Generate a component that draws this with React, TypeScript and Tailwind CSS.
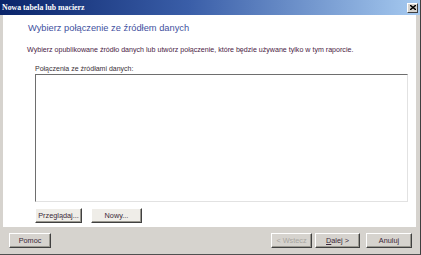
import React from "react";

function Btn({ children, w, disabled, light }: { children: React.ReactNode; w: string; disabled?: boolean; light?: boolean }) {
  return (
    <div
      className={`${w} h-[15px] flex items-center justify-center ${light ? "bg-[#efede8]" : "bg-[#d6d3ce]"} border border-t-white border-l-white border-r-[#404040] border-b-[#404040] shadow-[inset_-1px_-1px_0_#9a9890] text-[7.3px] leading-none ${disabled ? "text-[#a8a5a0]" : "text-[#3a2838]"}`}
    >
      {children}
    </div>
  );
}

export default function App() {
  return (
    <div
      className="w-[421px] h-[255px] bg-[#d6d3ce] flex flex-col overflow-hidden border-r border-b border-r-[#404040] border-b-[#505050]"
      style={{ fontFamily: "'Liberation Sans', Arial, sans-serif" }}
    >
      <div className="h-[15px] shrink-0 flex items-center justify-between pl-[2px] pr-[2px] bg-[linear-gradient(90deg,#0a246a_0%,#3a5ea8_45%,#a6caf0_100%)]">
        <span className="text-white font-bold text-[7.8px] leading-none" style={{ fontFamily: "'Liberation Serif', 'DejaVu Serif', serif" }}>
          Nowa tabela lub macierz
        </span>
        <div className="w-[11px] h-[10px] bg-[#d6d3ce] border border-t-white border-l-white border-r-[#404040] border-b-[#404040] flex items-center justify-center">
          <svg width="6" height="5" viewBox="0 0 6 5">
            <path d="M0 0 L6 5 M6 0 L0 5" stroke="#000" strokeWidth="1.4" />
          </svg>
        </div>
      </div>
      <div className="h-[212px] shrink-0 ml-[3px] mr-[4px] bg-white flex flex-col pl-[24px]">
        <div className="mt-[6px] ml-[1px] text-[9.3px] text-[#3f51a0] leading-[14px]">Wybierz połączenie ze źródłem danych</div>
        <div className="mt-[10px] text-[7.1px] text-[#4a2244] leading-[10px] whitespace-nowrap">
          Wybierz opublikowane źródło danych lub utwórz połączenie, które będzie używane tylko w tym raporcie.
        </div>
        <div className="ml-[8px] mt-[9px] text-[7px] text-[#3a3038] leading-[10px]">Połączenia ze źródłami danych:</div>
        <div className="ml-[8px] mt-[0px] h-[128px] w-[373px] bg-white border border-t-[#6e6e6e] border-l-[#6e6e6e] border-r-[#e2e2e2] border-b-[#e2e2e2]" />
        <div className="ml-[8px] mt-[6px] flex gap-[9px]">
          <Btn w="w-[47px]" light>Przeglądaj...</Btn>
          <Btn w="w-[51px]" light>Nowy...</Btn>
        </div>
      </div>
      <div className="flex items-center pl-[9px] pr-[8px] mt-[6px]">
        <Btn w="w-[42px]">Pomoc</Btn>
        <div className="flex-1" />
        <Btn w="w-[41px]" disabled>&lt; Wstecz</Btn>
        <div className="w-[3px]" />
        <Btn w="w-[45px]"><span><u>D</u>alej &gt;</span></Btn>
        <div className="w-[6px]" />
        <Btn w="w-[46px]">Anuluj</Btn>
      </div>
    </div>
  );
}
